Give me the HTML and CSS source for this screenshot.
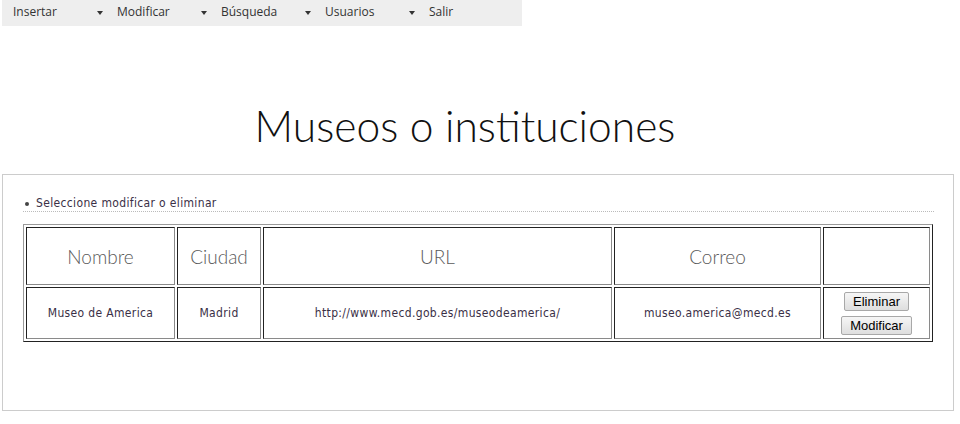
FILE: index.html
```html
<!DOCTYPE html>
<html lang="es">
<head>
<meta charset="utf-8">
<title>Museos o instituciones</title>
<link rel="stylesheet" href="styles.css">
</head>
<body>
<nav class="menu">
  <div class="menu-item has-sub">Insertar<span class="caret"></span></div>
  <div class="menu-item has-sub">Modificar<span class="caret"></span></div>
  <div class="menu-item has-sub">Búsqueda<span class="caret"></span></div>
  <div class="menu-item has-sub">Usuarios<span class="caret"></span></div>
  <div class="menu-item">Salir</div>
</nav>
<header class="page-head">
  <h1 class="title">Museos o instituciones</h1>
</header>
<main class="content">
  <ul class="notes">
    <li>Seleccione modificar o eliminar</li>
  </ul>
  <table class="grid">
    <thead>
      <tr>
        <th class="c-nombre">Nombre</th>
        <th class="c-ciudad">Ciudad</th>
        <th class="c-url">URL</th>
        <th class="c-correo">Correo</th>
        <th class="c-acc"></th>
      </tr>
    </thead>
    <tbody>
      <tr>
        <td>Museo de America</td>
        <td>Madrid</td>
        <td>http://www.mecd.gob.es/museodeamerica/</td>
        <td>museo.america@mecd.es</td>
        <td class="actions">
          <button class="btn">Eliminar</button>
          <button class="btn">Modificar</button>
        </td>
      </tr>
    </tbody>
  </table>
</main>
</body>
</html>
```

FILE: styles.css
```css
html, body {
  margin: 0;
  padding: 0;
  background: #fff;
}
body {
  padding: 0 2px;
  width: 952px;
}
.menu {
  display: flex;
  width: 520px;
  height: 26px;
  background: #eeeeee;
}
.menu-item {
  position: relative;
  width: 104px;
  box-sizing: border-box;
  padding-left: 11px;
  font-family: "Open Sans", "Noto Sans", sans-serif;
  font-size: 12px;
  line-height: 24px;
  color: #333;
}
.caret {
  position: absolute;
  left: 95px;
  top: 11px;
  width: 0;
  height: 0;
  border-left: 3px solid transparent;
  border-right: 3px solid transparent;
  border-top: 4px solid #333;
}
.page-head {
  height: 148px;
  display: flex;
  align-items: flex-end;
  justify-content: center;
  padding-right: 26px;
}
.title {
  margin: 0 0 27px;
  font-family: "Lato", sans-serif;
  font-weight: 300;
  font-size: 42.5px;
  line-height: 1;
  color: #111;
}
.content {
  border: 1px solid #cccccc;
  height: 237px;
  padding: 21px 19px 0 20px;
  box-sizing: border-box;
}
.notes {
  margin: 0 0 12px;
  padding: 0;
  list-style: none;
}
.notes li {
  position: relative;
  padding-left: 13px;
  font-family: "DejaVu Sans", sans-serif;
  font-stretch: semi-condensed;
  letter-spacing: 0.35px;
  font-size: 12px;
  line-height: 15px;
  color: #3a3046;
  border-bottom: 1px dotted #bbb;
}
.notes li::before {
  content: "";
  position: absolute;
  left: 2px;
  top: 6px;
  width: 4px;
  height: 4px;
  border-radius: 50%;
  background: #444;
}
.grid {
  width: 910px;
  table-layout: fixed;
  border-collapse: separate;
  border-spacing: 2px;
  border: 1px solid;
  border-color: #9a9a9a #222 #222 #9a9a9a;
}
.grid th, .grid td {
  box-sizing: border-box;
  border: 1px solid;
  border-color: #222 #8a8a8a #8a8a8a #222;
  text-align: center;
  padding: 0;
}
.grid th {
  height: 58px;
  font-family: "Lato", sans-serif;
  font-weight: 300;
  font-size: 19px;
  color: #5a5a5a;
}
.grid td {
  height: 52px;
  font-family: "DejaVu Sans", sans-serif;
  font-stretch: semi-condensed;
  letter-spacing: 0.35px;
  font-size: 12px;
  color: #3a3046;
}
.c-nombre { width: 149px; }
.c-ciudad { width: 84px; }
.c-url { width: 349px; }
.c-correo { width: 207px; }
.c-acc { width: 107px; }
.actions {
  line-height: 0;
}
.btn {
  display: block;
  margin: 0 auto;
  padding: 0 8px;
  height: 19px;
  font-family: "Liberation Sans", Arial, sans-serif;
  font-size: 13px;
  line-height: 17px;
  letter-spacing: 0;
  color: #000;
  background: linear-gradient(#f6f6f6, #dedede);
  border: 1px solid #a8a8a8;
  border-radius: 2px;
}
.btn + .btn {
  margin-top: 5px;
}
```
